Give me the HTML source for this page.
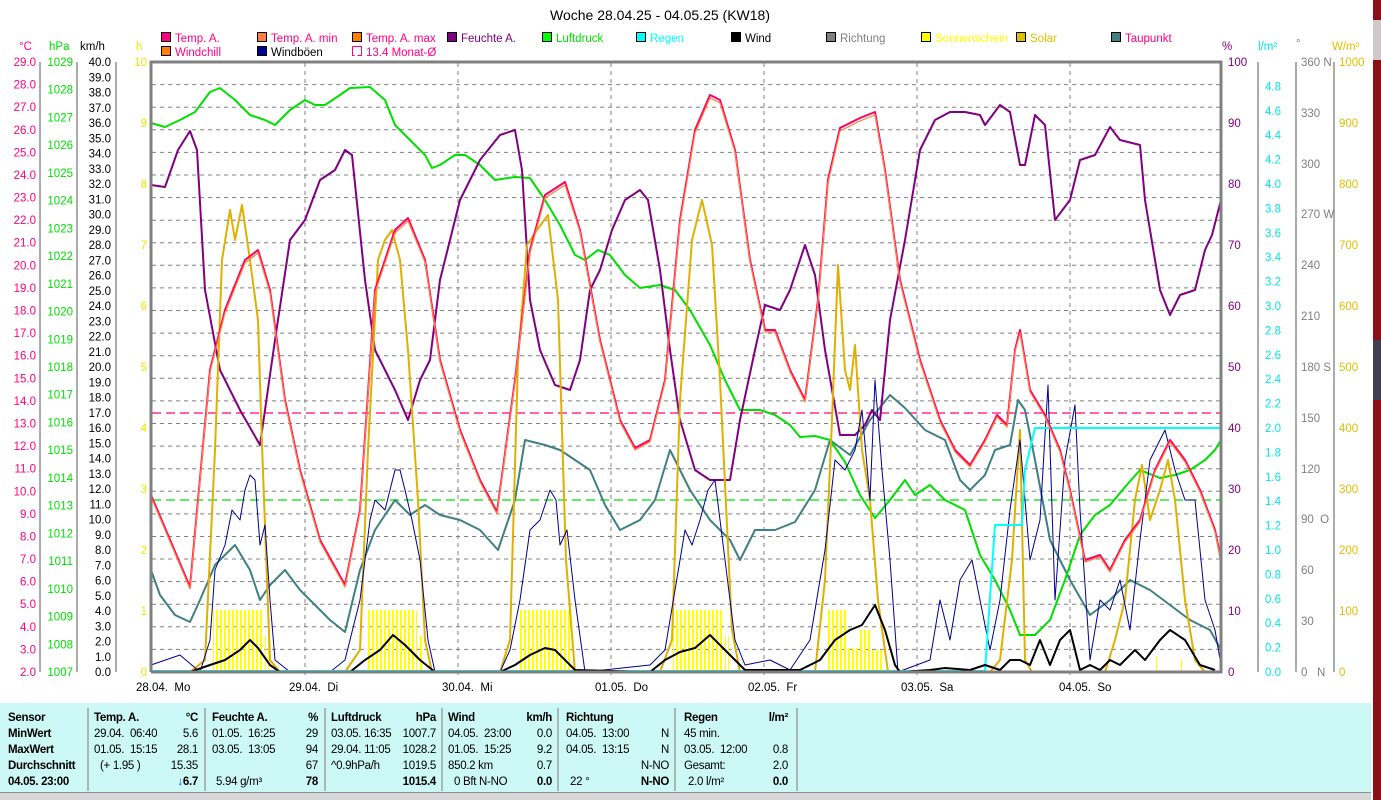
<!DOCTYPE html>
<html><head><meta charset="utf-8"><style>
body{margin:0;width:1381px;height:800px;overflow:hidden;background:#fff;font-family:"Liberation Sans",sans-serif;}
svg{position:absolute;left:0;top:0}
.t{position:absolute;font-size:11.5px;letter-spacing:-0.3px;white-space:nowrap;color:#000;line-height:14px}
.b{font-weight:bold}
.r{text-align:right}
</style></head><body>
<svg width="1381" height="800" font-family="Liberation Sans, sans-serif" font-size="11">
<defs>
<pattern id="sb" width="4" height="10" patternUnits="userSpaceOnUse"><rect x="0" y="0" width="2" height="10" fill="#ffff00"/></pattern>
</defs>
<text x="660" y="20" font-size="14" text-anchor="middle">Woche 28.04.25 - 04.05.25 (KW18)</text>
<g font-size="11" stroke="#000" stroke-width="1">
<rect x="161.5" y="32.5" width="9" height="9" fill="#ff0080"/>
<rect x="257.5" y="32.5" width="9" height="9" fill="#ff8040"/>
<rect x="352.5" y="32.5" width="9" height="9" fill="#ff8000"/>
<rect x="447.5" y="32.5" width="9" height="9" fill="#800080"/>
<rect x="542.5" y="32.5" width="9" height="9" fill="#00ff00"/>
<rect x="636.5" y="32.5" width="9" height="9" fill="#00ffff"/>
<rect x="731.5" y="32.5" width="9" height="9" fill="#000"/>
<rect x="826.5" y="32.5" width="9" height="9" fill="#808080"/>
<rect x="921.5" y="32.5" width="9" height="9" fill="#ffff00"/>
<rect x="1016.5" y="32.5" width="9" height="9" fill="#e0c000"/>
<rect x="1111.5" y="32.5" width="9" height="9" fill="#408080"/>
<rect x="161.5" y="46.5" width="9" height="9" fill="#ff8000"/>
<rect x="257.5" y="46.5" width="9" height="9" fill="#000090"/>
<path d="M352.5 46.5h9v9h-4" fill="none" stroke="#ff0080"/><path d="M352.5 46.5v9h2" fill="none" stroke="#ff0080"/>
</g>
<g font-size="11.5">
<text x="175" y="42" fill="#ff0080">Temp. A.</text>
<text x="271" y="42" fill="#ff0080">Temp. A. min</text>
<text x="366" y="42" fill="#ff0080">Temp. A. max</text>
<text x="461" y="42" fill="#800080">Feuchte A.</text>
<text x="556" y="42" fill="#00e000">Luftdruck</text>
<text x="650" y="42" fill="#00ffff">Regen</text>
<text x="745" y="42" fill="#000">Wind</text>
<text x="840" y="42" fill="#808080">Richtung</text>
<text x="935" y="42" fill="#ffff00">Sonnenschein</text>
<text x="1030" y="42" fill="#e0c000">Solar</text>
<text x="1125" y="42" fill="#ff0080">Taupunkt</text>
<text x="175" y="56" fill="#ff0080">Windchill</text>
<text x="271" y="56" fill="#000">Windböen</text>
<text x="366" y="56" fill="#ff0080">13.4 Monat-Ø</text>
</g>
<g font-size="11.5">
<text x="19" y="50" fill="#ff0080">°C</text>
<text x="49" y="50" fill="#00e000">hPa</text>
<text x="80" y="50" fill="#000">km/h</text>
<text x="136" y="50" fill="#e8e800">h</text>
<text x="1222" y="50" fill="#800080">%</text>
<text x="1258" y="50" fill="#00e0e0">l/m²</text>
<text x="1296" y="47" fill="#808080">°</text>
<text x="1332" y="50" fill="#e0c000">W/m²</text>
</g>
<g stroke="#808080" stroke-dasharray="4,4" stroke-width="1">
<line x1="152" x2="1220" y1="84.6" y2="84.6"/><line x1="152" x2="1220" y1="107.2" y2="107.2"/><line x1="152" x2="1220" y1="129.8" y2="129.8"/><line x1="152" x2="1220" y1="152.4" y2="152.4"/><line x1="152" x2="1220" y1="175" y2="175"/><line x1="152" x2="1220" y1="197.6" y2="197.6"/><line x1="152" x2="1220" y1="220.2" y2="220.2"/><line x1="152" x2="1220" y1="242.7" y2="242.7"/><line x1="152" x2="1220" y1="265.3" y2="265.3"/><line x1="152" x2="1220" y1="287.9" y2="287.9"/><line x1="152" x2="1220" y1="310.5" y2="310.5"/><line x1="152" x2="1220" y1="333.1" y2="333.1"/><line x1="152" x2="1220" y1="355.7" y2="355.7"/><line x1="152" x2="1220" y1="378.3" y2="378.3"/><line x1="152" x2="1220" y1="400.9" y2="400.9"/><line x1="152" x2="1220" y1="423.5" y2="423.5"/><line x1="152" x2="1220" y1="446.1" y2="446.1"/><line x1="152" x2="1220" y1="468.7" y2="468.7"/><line x1="152" x2="1220" y1="491.3" y2="491.3"/><line x1="152" x2="1220" y1="513.9" y2="513.9"/><line x1="152" x2="1220" y1="536.5" y2="536.5"/><line x1="152" x2="1220" y1="559" y2="559"/><line x1="152" x2="1220" y1="581.6" y2="581.6"/><line x1="152" x2="1220" y1="604.2" y2="604.2"/><line x1="152" x2="1220" y1="626.8" y2="626.8"/><line x1="152" x2="1220" y1="649.4" y2="649.4"/>
<line x1="305" x2="305" y1="63" y2="678"/><line x1="458" x2="458" y1="63" y2="678"/><line x1="611" x2="611" y1="63" y2="678"/><line x1="764" x2="764" y1="63" y2="678"/><line x1="917" x2="917" y1="63" y2="678"/><line x1="1070" x2="1070" y1="63" y2="678"/>
</g>
<g fill="url(#sb)">
<rect x="213" y="610" width="50" height="62"/><rect x="265" y="636" width="4" height="36"/>
<rect x="367" y="610" width="50" height="62"/><rect x="419" y="636" width="4" height="36"/>
<rect x="520" y="610" width="50" height="62"/>
<rect x="673" y="610" width="50" height="62"/><rect x="725" y="636" width="4" height="36"/>
<rect x="826" y="610" width="20" height="62"/><rect x="846" y="648" width="12" height="24"/><rect x="858" y="630" width="12" height="42"/><rect x="870" y="650" width="14" height="22"/>
<rect x="1142" y="656" width="2" height="16"/><rect x="1155" y="656" width="2" height="16"/><rect x="1162" y="650" width="2" height="22"/><rect x="1170" y="656" width="2" height="16"/><rect x="1181" y="660" width="2" height="12"/>
</g>
<line x1="152" x2="1220" y1="413" y2="413" stroke="#ff0080" stroke-dasharray="9,5" stroke-width="1.3"/>
<line x1="152" x2="1220" y1="500" y2="500" stroke="#00e000" stroke-dasharray="9,5" stroke-width="1.3"/>
<g fill="none" stroke-linejoin="round">
<polyline stroke="#408080" stroke-width="2" points="151,570 160,595 175,615 190,622 200,600 215,565 235,545 250,570 260,600 270,585 285,570 300,590 315,605 330,620 345,632 360,570 375,530 395,500 410,515 425,505 440,515 460,520 480,530 498,550 515,500 525,440 545,445 560,450 575,460 590,470 605,505 620,530 640,520 655,500 670,450 690,490 710,520 730,540 740,560 755,530 775,530 795,522 815,490 830,440 850,455 870,420 890,395 905,408 925,430 945,440 960,480 970,490 985,475 995,450 1010,445 1018,400 1025,410 1035,460 1050,540 1070,580 1090,615 1110,600 1130,580 1150,590 1170,605 1190,620 1210,630 1221,650"/>
<polyline stroke="#00e000" stroke-width="2" points="151,123 165,127 180,120 195,112 210,92 220,88 235,100 250,115 265,120 275,125 290,110 305,100 315,105 325,105 340,95 350,88 370,87 385,100 395,125 410,140 425,155 432,168 440,165 455,155 465,155 480,165 495,180 515,177 530,178 545,200 560,225 575,255 585,260 598,250 610,255 625,275 640,288 660,285 675,290 690,310 710,345 725,380 740,410 760,410 775,415 790,425 800,437 815,436 830,440 845,462 860,495 875,518 890,500 905,480 915,495 930,485 945,500 965,510 980,555 995,580 1010,610 1020,635 1035,635 1050,620 1065,580 1080,535 1095,515 1110,505 1125,487 1140,470 1160,478 1175,475 1190,470 1205,460 1215,450 1221,440"/>
<polyline stroke="#800080" stroke-width="2" points="151,185 165,187 178,150 190,131 197,150 205,290 220,370 240,410 260,445 275,340 290,240 305,220 320,180 335,170 345,150 352,155 365,280 375,350 395,390 408,420 420,380 430,360 440,280 460,200 480,160 500,135 515,130 522,170 530,300 540,350 555,385 570,390 580,360 590,290 600,270 612,230 625,200 640,190 648,200 660,270 670,350 680,420 695,470 710,480 730,480 740,420 755,350 765,305 780,310 790,290 805,245 815,275 825,350 840,435 855,435 865,425 872,410 880,420 890,320 905,240 920,150 935,120 950,112 965,112 980,115 985,125 1000,105 1010,112 1020,165 1025,165 1035,115 1045,125 1055,220 1070,200 1080,160 1095,155 1110,127 1120,140 1140,145 1145,200 1160,290 1170,315 1180,295 1195,290 1205,250 1212,235 1221,200"/>
<polyline stroke="#e0b000" stroke-width="2" points="151,672 190,672 205,660 215,450 222,260 230,210 235,240 242,205 250,260 258,320 262,445 270,660 280,672 345,672 360,650 368,450 378,260 385,240 392,230 400,260 408,350 418,500 425,640 432,672 500,672 510,640 518,360 527,245 537,230 548,215 558,300 566,560 575,672 660,672 672,640 680,400 692,240 702,200 712,245 720,380 732,630 740,672 815,672 825,580 832,420 838,265 845,370 850,390 855,345 862,450 870,500 878,600 888,672 990,672 1000,660 1012,560 1020,430 1025,660 1032,672 1105,672 1115,640 1125,600 1135,500 1142,465 1150,520 1160,490 1168,460 1175,500 1185,600 1195,660 1205,672 1221,672"/>
<polyline stroke="#000090" stroke-width="1" points="151,665 180,655 200,672 210,640 215,570 225,545 232,510 240,520 245,490 250,475 255,480 260,545 265,525 270,600 275,660 290,672 330,672 345,660 360,600 370,520 375,500 385,510 395,470 400,470 405,490 412,520 420,560 428,640 435,672 500,672 510,650 520,600 530,530 540,520 550,490 556,500 560,545 567,530 575,600 585,672 650,665 665,650 675,590 685,530 692,545 700,520 708,490 715,480 725,560 735,640 745,665 770,660 790,670 810,640 825,550 835,460 845,470 855,450 862,410 870,500 875,380 882,470 890,560 898,672 930,660 940,600 950,640 960,580 972,560 980,600 990,650 1000,600 1010,510 1020,440 1030,560 1040,520 1048,385 1055,600 1065,460 1075,405 1080,510 1090,660 1100,600 1110,610 1120,580 1130,630 1140,540 1150,460 1165,430 1175,470 1185,500 1195,500 1205,600 1215,630 1221,665"/>
<polyline stroke="#00ffff" stroke-width="2" points="152,671 985,671 995,525 1022,525 1025,470 1035,428 1221,428"/>
<polyline stroke="#ff0060" stroke-width="2" points="151,495 190,587 210,370 225,310 245,260 258,250 270,290 285,400 300,470 320,540 345,585 360,510 375,290 395,230 408,218 425,260 440,360 460,430 480,480 497,512 515,380 530,250 545,195 565,182 580,230 600,340 620,420 635,448 650,440 665,380 680,220 695,130 710,95 720,100 735,150 750,260 765,330 775,330 790,370 805,400 818,300 828,180 840,128 860,118 875,112 885,170 900,280 920,360 940,420 955,450 970,465 985,440 997,415 1007,425 1015,350 1020,330 1030,390 1045,415 1060,450 1070,490 1085,560 1100,555 1110,570 1125,540 1140,520 1155,470 1170,440 1185,460 1200,490 1215,530 1221,560"/>
<polyline stroke="#ff8040" stroke-width="1.2" points="151,497 190,589 210,372 225,313 245,263 258,253 270,293 285,402 300,472 320,542 345,587 360,512 375,293 395,233 408,221 425,262 440,362 460,432 480,482 497,514 515,382 530,253 545,198 565,185 580,232 600,342 620,422 635,450 650,442 665,382 680,223 695,133 710,98 720,103 735,152 750,262 765,332 775,332 790,372 805,402 818,302 828,183 840,131 860,121 875,115 885,172 900,282 920,362 940,422 955,452 970,467 985,442 997,417 1007,427 1015,352 1020,333 1030,392 1045,417 1060,452 1070,492 1085,562 1100,557 1110,572 1125,542 1140,522 1155,472 1170,442 1185,462 1200,492 1215,532 1221,562"/>
<polyline stroke="#000" stroke-width="2" points="151,672 190,672 210,665 225,660 240,650 250,640 258,648 270,665 280,672 350,672 365,660 380,650 393,635 405,645 420,660 435,672 500,672 515,665 530,655 545,648 555,650 565,660 575,670 650,672 665,660 680,652 695,648 710,635 720,645 735,660 745,670 800,670 820,660 835,640 850,630 862,625 875,605 885,630 895,665 900,672 930,670 945,668 970,670 985,665 1000,670 1010,660 1020,660 1030,665 1040,640 1050,665 1060,640 1070,630 1080,670 1090,665 1100,670 1110,660 1120,665 1135,650 1145,660 1160,640 1170,630 1185,640 1200,665 1215,670"/>
</g>
<path d="M151 672V62H1221V672H151" fill="none" stroke="#808080" stroke-width="3"/>
<g stroke="#808080" stroke-width="1.3">
<line x1="40" y1="62" x2="40" y2="672"/><line x1="77" y1="62" x2="77" y2="672"/><line x1="116" y1="62" x2="116" y2="672"/>
<line x1="1258" y1="62" x2="1258" y2="672"/><line x1="1296" y1="62" x2="1296" y2="672"/><line x1="1334" y1="62" x2="1334" y2="672"/>
</g>
<g font-size="11.5" fill="#ff0080" text-anchor="end">
<text x="36" y="66">29.0</text><text x="36" y="88.6">28.0</text><text x="36" y="111.2">27.0</text><text x="36" y="133.8">26.0</text><text x="36" y="156.4">25.0</text><text x="36" y="179">24.0</text><text x="36" y="201.6">23.0</text><text x="36" y="224.2">22.0</text><text x="36" y="246.7">21.0</text><text x="36" y="269.3">20.0</text><text x="36" y="291.9">19.0</text><text x="36" y="314.5">18.0</text><text x="36" y="337.1">17.0</text><text x="36" y="359.7">16.0</text><text x="36" y="382.3">15.0</text><text x="36" y="404.9">14.0</text><text x="36" y="427.5">13.0</text><text x="36" y="450.1">12.0</text><text x="36" y="472.7">11.0</text><text x="36" y="495.3">10.0</text><text x="36" y="517.9">9.0</text><text x="36" y="540.5">8.0</text><text x="36" y="563">7.0</text><text x="36" y="585.6">6.0</text><text x="36" y="608.2">5.0</text><text x="36" y="630.8">4.0</text><text x="36" y="653.4">3.0</text><text x="36" y="676">2.0</text>
</g>
<g font-size="11.5" fill="#00e000" text-anchor="end">
<text x="73" y="66">1029</text><text x="73" y="93.7">1028</text><text x="73" y="121.5">1027</text><text x="73" y="149.2">1026</text><text x="73" y="176.9">1025</text><text x="73" y="204.6">1024</text><text x="73" y="232.4">1023</text><text x="73" y="260.1">1022</text><text x="73" y="287.8">1021</text><text x="73" y="315.5">1020</text><text x="73" y="343.3">1019</text><text x="73" y="371">1018</text><text x="73" y="398.7">1017</text><text x="73" y="426.5">1016</text><text x="73" y="454.2">1015</text><text x="73" y="481.9">1014</text><text x="73" y="509.6">1013</text><text x="73" y="537.4">1012</text><text x="73" y="565.1">1011</text><text x="73" y="592.8">1010</text><text x="73" y="620.5">1009</text><text x="73" y="648.3">1008</text><text x="73" y="676">1007</text>
</g>
<g font-size="11.5" fill="#000" text-anchor="end">
<text x="111" y="66">40.0</text><text x="111" y="81.3">39.0</text><text x="111" y="96.5">38.0</text><text x="111" y="111.8">37.0</text><text x="111" y="127">36.0</text><text x="111" y="142.3">35.0</text><text x="111" y="157.5">34.0</text><text x="111" y="172.8">33.0</text><text x="111" y="188">32.0</text><text x="111" y="203.3">31.0</text><text x="111" y="218.5">30.0</text><text x="111" y="233.8">29.0</text><text x="111" y="249">28.0</text><text x="111" y="264.3">27.0</text><text x="111" y="279.5">26.0</text><text x="111" y="294.8">25.0</text><text x="111" y="310">24.0</text><text x="111" y="325.3">23.0</text><text x="111" y="340.5">22.0</text><text x="111" y="355.8">21.0</text><text x="111" y="371">20.0</text><text x="111" y="386.3">19.0</text><text x="111" y="401.5">18.0</text><text x="111" y="416.8">17.0</text><text x="111" y="432">16.0</text><text x="111" y="447.3">15.0</text><text x="111" y="462.5">14.0</text><text x="111" y="477.8">13.0</text><text x="111" y="493">12.0</text><text x="111" y="508.3">11.0</text><text x="111" y="523.5">10.0</text><text x="111" y="538.8">9.0</text><text x="111" y="554">8.0</text><text x="111" y="569.3">7.0</text><text x="111" y="584.5">6.0</text><text x="111" y="599.8">5.0</text><text x="111" y="615">4.0</text><text x="111" y="630.3">3.0</text><text x="111" y="645.5">2.0</text><text x="111" y="660.8">1.0</text><text x="111" y="676">0.0</text>
</g>
<g font-size="11.5" fill="#e8e800" text-anchor="end">
<text x="147" y="66">10</text><text x="147" y="127">9</text><text x="147" y="188">8</text><text x="147" y="249">7</text><text x="147" y="310">6</text><text x="147" y="371">5</text><text x="147" y="432">4</text><text x="147" y="493">3</text><text x="147" y="554">2</text><text x="147" y="615">1</text><text x="147" y="676">0</text>
</g>
<g font-size="11.5" fill="#800080">
<text x="1228" y="66">100</text><text x="1228" y="127">90</text><text x="1228" y="188">80</text><text x="1228" y="249">70</text><text x="1228" y="310">60</text><text x="1228" y="371">50</text><text x="1228" y="432">40</text><text x="1228" y="493">30</text><text x="1228" y="554">20</text><text x="1228" y="615">10</text><text x="1228" y="676">0</text>
</g>
<g font-size="11.5" fill="#00e8e8">
<text x="1265" y="90.4">4.8</text><text x="1265" y="114.8">4.6</text><text x="1265" y="139.2">4.4</text><text x="1265" y="163.6">4.2</text><text x="1265" y="188">4.0</text><text x="1265" y="212.4">3.8</text><text x="1265" y="236.8">3.6</text><text x="1265" y="261.2">3.4</text><text x="1265" y="285.6">3.2</text><text x="1265" y="310">3.0</text><text x="1265" y="334.4">2.8</text><text x="1265" y="358.8">2.6</text><text x="1265" y="383.2">2.4</text><text x="1265" y="407.6">2.2</text><text x="1265" y="432">2.0</text><text x="1265" y="456.4">1.8</text><text x="1265" y="480.8">1.6</text><text x="1265" y="505.2">1.4</text><text x="1265" y="529.6">1.2</text><text x="1265" y="554">1.0</text><text x="1265" y="578.4">0.8</text><text x="1265" y="602.8">0.6</text><text x="1265" y="627.2">0.4</text><text x="1265" y="651.6">0.2</text><text x="1265" y="676">0.0</text>
</g>
<g font-size="11.5" fill="#808080">
<text x="1301" y="66">360 N</text><text x="1301" y="117">330</text><text x="1301" y="168">300</text><text x="1301" y="218">270 W</text><text x="1301" y="269">240</text><text x="1301" y="320">210</text><text x="1301" y="371">180 S</text><text x="1301" y="422">150</text><text x="1301" y="473">120</text><text x="1301" y="523">90&#160;&#160;O</text><text x="1301" y="574">60</text><text x="1301" y="625">30</text><text x="1301" y="676">0&#160;&#160;&#160;N</text>
</g>
<g font-size="11.5" fill="#e0c000">
<text x="1339" y="66">1000</text><text x="1339" y="127">900</text><text x="1339" y="188">800</text><text x="1339" y="249">700</text><text x="1339" y="310">600</text><text x="1339" y="371">500</text><text x="1339" y="432">400</text><text x="1339" y="493">300</text><text x="1339" y="554">200</text><text x="1339" y="615">100</text><text x="1339" y="676">0</text>
</g>
<g font-size="11.5" fill="#000">
<text x="136" y="691">28.04.&#160;&#160;Mo</text><text x="289" y="691">29.04.&#160;&#160;Di</text><text x="442" y="691">30.04.&#160;&#160;Mi</text><text x="595" y="691">01.05.&#160;&#160;Do</text><text x="748" y="691">02.05.&#160;&#160;Fr</text><text x="901" y="691">03.05.&#160;&#160;Sa</text><text x="1059" y="691">04.05.&#160;&#160;So</text>
</g>
<rect x="0" y="703" width="1371" height="89" fill="#ccf8f6"/>
<g stroke="#a0a0a0" stroke-width="1.5">
<line x1="88" y1="708" x2="88" y2="791"/><line x1="205" y1="708" x2="205" y2="791"/><line x1="325" y1="708" x2="325" y2="791"/><line x1="442" y1="708" x2="442" y2="791"/><line x1="558" y1="708" x2="558" y2="791"/><line x1="675" y1="708" x2="675" y2="791"/><line x1="797" y1="708" x2="797" y2="791"/>
</g>
<rect x="0" y="792" width="1371" height="8" fill="#d8d8d8"/>
<line x1="0" y1="792.5" x2="1371" y2="792.5" stroke="#909090"/>
<rect x="1373" y="0" width="8" height="800" fill="#8a1018"/>
<rect x="1373" y="340" width="8" height="60" fill="#404050"/>
<rect x="1373" y="20" width="8" height="40" fill="#d0c8c8"/>
</svg>
<div class="t b" style="left:8px;top:711px">Sensor</div>
<div class="t b" style="left:8px;top:727px">MinWert</div>
<div class="t b" style="left:8px;top:743px">MaxWert</div>
<div class="t b" style="left:8px;top:759px">Durchschnitt</div>
<div class="t b" style="left:8px;top:775px">04.05. 23:00</div>

<div class="t b" style="left:94px;top:711px">Temp. A.</div><div class="t b r" style="left:150px;width:48px;top:711px">°C</div>
<div class="t" style="left:94px;top:727px">29.04.&#160;&#160;06:40</div><div class="t r" style="left:150px;width:48px;top:727px">5.6</div>
<div class="t" style="left:94px;top:743px">01.05.&#160;&#160;15:15</div><div class="t r" style="left:150px;width:48px;top:743px">28.1</div>
<div class="t" style="left:100px;top:759px">(+ 1.95 )</div><div class="t r" style="left:150px;width:48px;top:759px">15.35</div>
<div class="t b r" style="left:150px;width:48px;top:775px"><span style="color:#0040ff">↓</span>6.7</div>

<div class="t b" style="left:212px;top:711px">Feuchte A.</div><div class="t b r" style="left:270px;width:48px;top:711px">%</div>
<div class="t" style="left:212px;top:727px">01.05.&#160;&#160;16:25</div><div class="t r" style="left:270px;width:48px;top:727px">29</div>
<div class="t" style="left:212px;top:743px">03.05.&#160;&#160;13:05</div><div class="t r" style="left:270px;width:48px;top:743px">94</div>
<div class="t r" style="left:270px;width:48px;top:759px">67</div>
<div class="t" style="left:216px;top:775px">5.94 g/m³</div><div class="t b r" style="left:270px;width:48px;top:775px">78</div>

<div class="t b" style="left:331px;top:711px">Luftdruck</div><div class="t b r" style="left:388px;width:48px;top:711px">hPa</div>
<div class="t" style="left:331px;top:727px">03.05.&#160;16:35</div><div class="t r" style="left:392px;width:44px;top:727px">1007.7</div>
<div class="t" style="left:331px;top:743px">29.04.&#160;11:05</div><div class="t r" style="left:392px;width:44px;top:743px">1028.2</div>
<div class="t" style="left:331px;top:759px">^0.9hPa/h</div><div class="t r" style="left:392px;width:44px;top:759px">1019.5</div>
<div class="t b r" style="left:388px;width:48px;top:775px">1015.4</div>

<div class="t b" style="left:448px;top:711px">Wind</div><div class="t b r" style="left:503px;width:49px;top:711px">km/h</div>
<div class="t" style="left:448px;top:727px">04.05.&#160;&#160;23:00</div><div class="t r" style="left:503px;width:49px;top:727px">0.0</div>
<div class="t" style="left:448px;top:743px">01.05.&#160;&#160;15:25</div><div class="t r" style="left:503px;width:49px;top:743px">9.2</div>
<div class="t" style="left:448px;top:759px">850.2 km</div><div class="t r" style="left:503px;width:49px;top:759px">0.7</div>
<div class="t" style="left:454px;top:775px">0 Bft N-NO</div><div class="t b r" style="left:503px;width:49px;top:775px">0.0</div>

<div class="t b" style="left:566px;top:711px">Richtung</div>
<div class="t" style="left:566px;top:727px">04.05.&#160;&#160;13:00</div><div class="t r" style="left:620px;width:49px;top:727px">N</div>
<div class="t" style="left:566px;top:743px">04.05.&#160;&#160;13:15</div><div class="t r" style="left:620px;width:49px;top:743px">N</div>
<div class="t r" style="left:620px;width:49px;top:759px">N-NO</div>
<div class="t" style="left:570px;top:775px">22 °</div><div class="t b r" style="left:620px;width:49px;top:775px">N-NO</div>

<div class="t b" style="left:684px;top:711px">Regen</div><div class="t b r" style="left:740px;width:48px;top:711px">l/m²</div>
<div class="t" style="left:684px;top:727px">45 min.</div>
<div class="t" style="left:684px;top:743px">03.05.&#160;&#160;12:00</div><div class="t r" style="left:740px;width:48px;top:743px">0.8</div>
<div class="t" style="left:684px;top:759px">Gesamt:</div><div class="t r" style="left:740px;width:48px;top:759px">2.0</div>
<div class="t" style="left:688px;top:775px">2.0 l/m²</div><div class="t b r" style="left:740px;width:48px;top:775px">0.0</div>
</body></html>
